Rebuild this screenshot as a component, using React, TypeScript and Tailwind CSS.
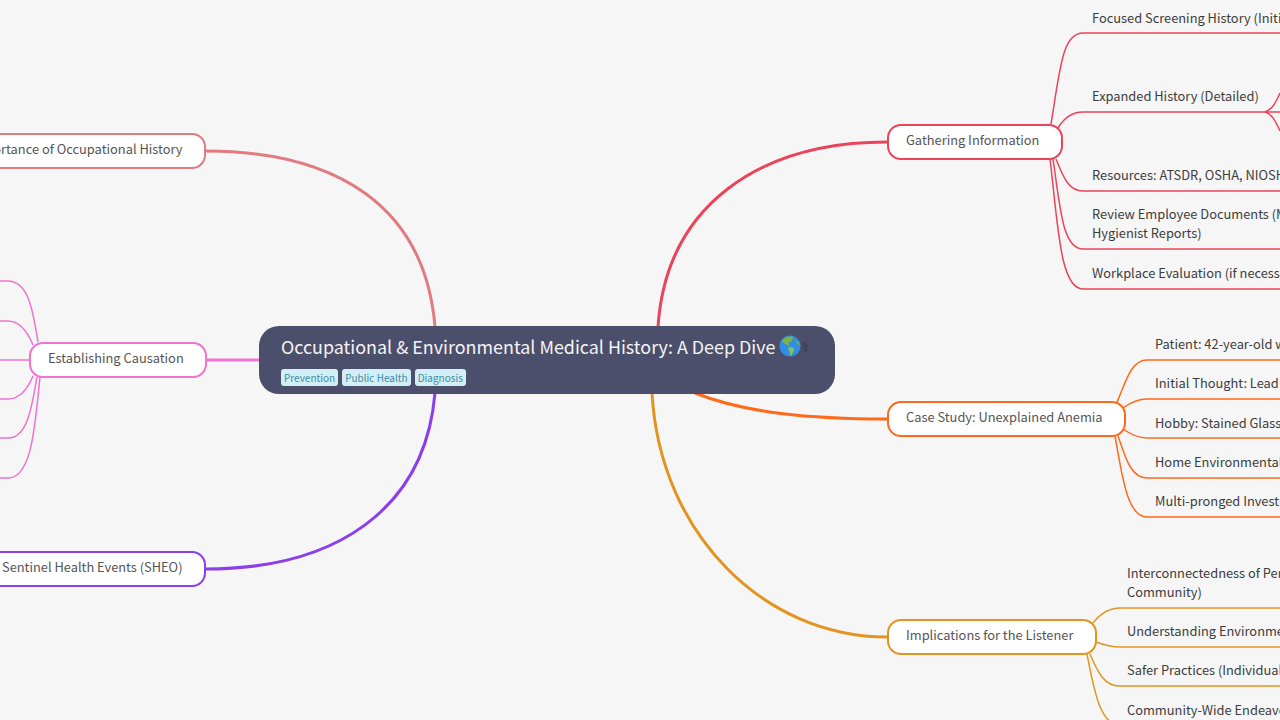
const font = "font-['Noto_Sans_CJK_SC','Noto_Sans',sans-serif]"

const links = [
  // main branches
  { d: "M435 327C425 205 335 151 206 151", color: "#e07b80", width: 3 },
  { d: "M259 360L206 360", color: "#ee74d0", width: 3 },
  { d: "M435 393C425 510 335 569 206 569", color: "#8b3eea", width: 3 },
  { d: "M658 327C666 205 760 142 887 142", color: "#e9445a", width: 3 },
  { d: "M695 393C745 413 810 419 887 419", color: "#ff6a1a", width: 3 },
  { d: "M652 393C660 535 765 637 887 637", color: "#e2941f", width: 3 },
  // gathering information
  { d: "M1051 124C1060 70 1062 33 1083 33L1280 33", color: "#e9445a", width: 1.5 },
  { d: "M1058 128C1064 118 1072 112 1083 112L1280 112", color: "#e9445a", width: 1.5 },
  { d: "M1265 112C1272 110 1276 102 1280 93", color: "#e9445a", width: 1.5 },
  { d: "M1265 112C1272 114 1276 122 1280 131", color: "#e9445a", width: 1.5 },
  { d: "M1056 159C1063 176 1068 191 1083 191L1280 191", color: "#e9445a", width: 1.5 },
  { d: "M1053 159C1060 205 1062 249 1083 249L1280 249", color: "#e9445a", width: 1.5 },
  { d: "M1050 159C1058 225 1060 289 1083 289L1280 289", color: "#e9445a", width: 1.5 },
  // case study
  { d: "M1117 402C1125 385 1130 360 1147 360L1280 360", color: "#ff6a1a", width: 1.5 },
  { d: "M1123 408C1130 403 1137 399 1147 399L1280 399", color: "#ff6a1a", width: 1.5 },
  { d: "M1123 429C1130 434 1137 438 1147 438L1280 438", color: "#ff6a1a", width: 1.5 },
  { d: "M1118 436C1125 455 1130 478 1147 478L1280 478", color: "#ff6a1a", width: 1.5 },
  { d: "M1115 436C1122 475 1127 517 1147 517L1280 517", color: "#ff6a1a", width: 1.5 },
  // implications
  { d: "M1093 623C1100 614 1108 608 1120 608L1280 608", color: "#e2941f", width: 1.5 },
  { d: "M1096 642C1104 645 1110 647 1120 647L1280 647", color: "#e2941f", width: 1.5 },
  { d: "M1090 654C1097 670 1103 686 1120 686L1280 686", color: "#e2941f", width: 1.5 },
  { d: "M1087 654C1094 690 1100 725 1120 725L1280 725", color: "#e2941f", width: 1.5 },
  // establishing causation
  { d: "M38 342C33 310 28 281 8 281L0 281", color: "#ee74d0", width: 1.5 },
  { d: "M33 345C28 333 20 321 8 321L0 321", color: "#ee74d0", width: 1.5 },
  { d: "M30 360L0 360", color: "#ee74d0", width: 1.5 },
  { d: "M33 376C28 388 20 399 8 399L0 399", color: "#ee74d0", width: 1.5 },
  { d: "M37 377C32 405 28 438 8 438L0 438", color: "#ee74d0", width: 1.5 },
  { d: "M40 377C35 425 32 478 8 478L0 478", color: "#ee74d0", width: 1.5 },
]

const topics = [
  { text: "Importance of Occupational History", box: "right-[1074px] top-[133px] border-[#e07b80]" },
  { text: "Establishing Causation", box: "left-[29px] top-[342px] border-[#ee74d0]" },
  { text: "Occupational Sentinel Health Events (SHEO)", box: "right-[1074px] top-[551px] border-[#8b3eea]" },
  { text: "Gathering Information", box: "left-[887px] top-[124px] border-[#e9445a]" },
  { text: "Case Study: Unexplained Anemia", box: "left-[887px] top-[401px] border-[#ff6a1a]" },
  { text: "Implications for the Listener", box: "left-[887px] top-[619px] border-[#e2941f]" },
]

const leaves = [
  { lines: ["Focused Screening History (Initial)"], pos: "left-[1092px] top-[8px]" },
  { lines: ["Expanded History (Detailed)"], pos: "left-[1092px] top-[86px]" },
  { lines: ["Resources: ATSDR, OSHA, NIOSH"], pos: "left-[1092px] top-[165px]" },
  { lines: ["Review Employee Documents (MSDS, Industrial", "Hygienist Reports)"], pos: "left-[1092px] top-[204px]" },
  { lines: ["Workplace Evaluation (if necessary)"], pos: "left-[1092px] top-[263px]" },
  { lines: ["Patient: 42-year-old woman"], pos: "left-[1155px] top-[334px]" },
  { lines: ["Initial Thought: Lead Exposure"], pos: "left-[1155px] top-[373px]" },
  { lines: ["Hobby: Stained Glass"], pos: "left-[1155px] top-[413px]" },
  { lines: ["Home Environmental Check"], pos: "left-[1155px] top-[452px]" },
  { lines: ["Multi-pronged Investigation"], pos: "left-[1155px] top-[491px]" },
  { lines: ["Interconnectedness of Personal Health &", "Community)"], pos: "left-[1127px] top-[563px]" },
  { lines: ["Understanding Environmental Risks"], pos: "left-[1127px] top-[621px]" },
  { lines: ["Safer Practices (Individual)"], pos: "left-[1127px] top-[660px]" },
  { lines: ["Community-Wide Endeavors"], pos: "left-[1127px] top-[700px]" },
]

const tags = ["Prevention", "Public Health", "Diagnosis"]

function Globe() {
  return (
    <svg width="22" height="22" viewBox="0 0 22 22" className="shrink-0">
      <circle cx="11" cy="11" r="10.5" fill="#2f8fe6" />
      <path d="M4 4.5C6 2 10 1 13 1.5L14.5 3.5L12.5 4.5L13 6L10.5 7L9.5 9L11 10.5L9 11L7 9.5L4.5 8L3 7Z" fill="#7cb342" />
      <path d="M10 12L13.5 12.5L15.5 14.5L14 17L12.5 20.5L11 20L10.5 16L9 14Z" fill="#8bc34a" />
      <path d="M17 5L19.5 7.5L20 10L18 9Z" fill="#7cb342" />
    </svg>
  )
}

export default function App() {
  return (
    <div className={`relative w-[1280px] h-[720px] overflow-hidden bg-[#f6f6f6] ${font}`}>
      <svg width="1280" height="720" viewBox="0 0 1280 720" fill="none" className="absolute inset-0">
        {links.map((link, i) => (
          <path key={i} d={link.d} stroke={link.color} strokeWidth={link.width} />
        ))}
      </svg>

      {leaves.map((leaf) => (
        <div key={leaf.lines[0]} className={`absolute whitespace-nowrap text-[12.85px] leading-[19px] text-[#3c3c3c] ${leaf.pos}`}>
          {leaf.lines.map((line) => (
            <div key={line}>{line}</div>
          ))}
        </div>
      ))}

      {topics.map((topic) => (
        <div
          key={topic.text}
          className={`absolute flex h-[36px] items-center whitespace-nowrap rounded-[14px] border-[2.5px] bg-white pb-[5px] pl-[17px] pr-[21.5px] text-[12.85px] text-[#555555] ${topic.box}`}
        >
          {topic.text}
        </div>
      ))}

      <div className="absolute left-[259px] top-[326px] flex h-[68px] w-[576px] flex-col gap-[10px] rounded-[20px] bg-[#4c4f6b] px-[22px] pt-[7px]">
        <div className="flex h-[26px] items-center gap-[4px] whitespace-nowrap text-[17.9px] leading-[26px] text-[#f4f4f6]">
          <span>Occupational &amp; Environmental Medical History: A Deep Dive</span>
          <Globe />
          <span className="-ml-[4px] text-[16px] text-[#3a3a44]">⚕</span>
        </div>
        <div className="flex gap-[4px]">
          {tags.map((tag) => (
            <span key={tag} className="flex h-[17px] items-center rounded-[3px] bg-[#d3eff6] px-[3px] text-[10px] text-[#3f8ba3]">
              {tag}
            </span>
          ))}
        </div>
      </div>
    </div>
  )
}
